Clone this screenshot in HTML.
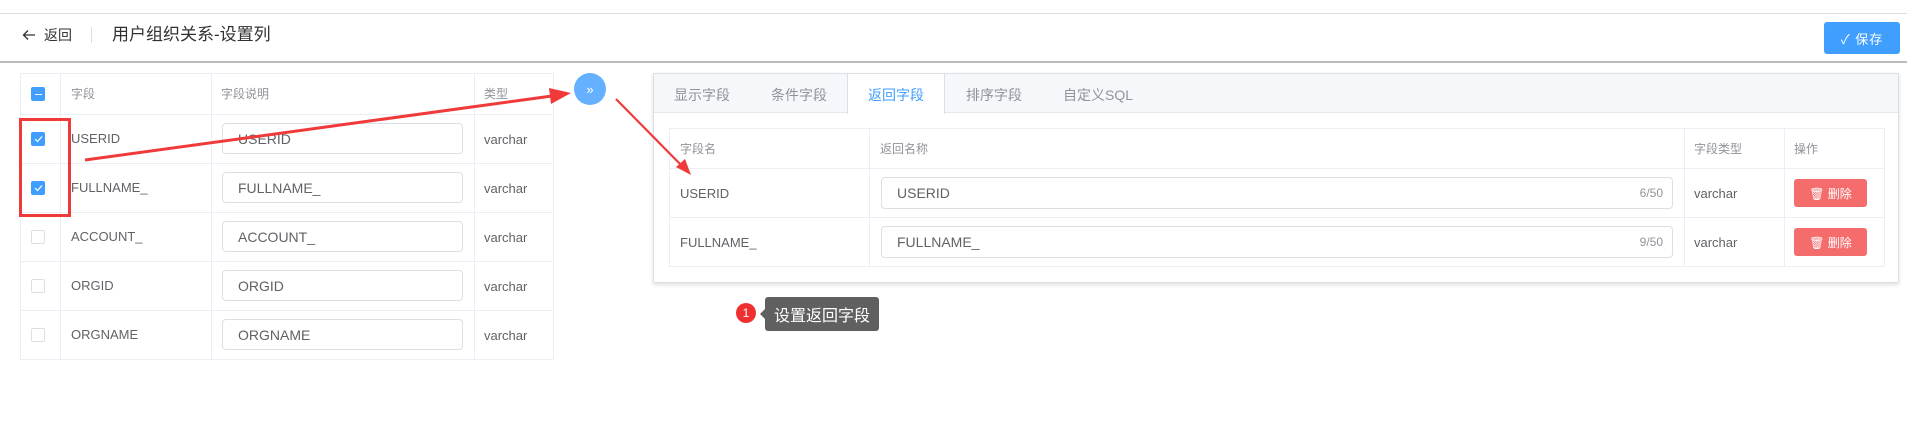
<!DOCTYPE html>
<html><head><meta charset="utf-8"><style>
*{box-sizing:border-box;margin:0;padding:0}
body{width:1907px;height:436px;background:#fff;position:relative;overflow:hidden;font-family:"Liberation Sans","Noto Sans CJK SC",sans-serif;color:#606266;font-size:13px}
.a{position:absolute}
.cell{position:absolute;display:flex;align-items:center}
.inp{position:absolute;border:1px solid #dcdfe6;border-radius:4px;background:#fff;display:flex;align-items:center;padding-left:15px;font-size:14px;color:#606266}
.cb{position:absolute;width:14px;height:14px;border:1px solid #dcdfe6;border-radius:2px;background:#fff}
.cb.on{background:#409eff;border-color:#409eff}
.hl{position:absolute;height:1px;background:#ebeef5}
.vl{position:absolute;width:1px;background:#ebeef5}
.th{color:#909399;font-size:12px;line-height:14px}
.t{position:absolute;line-height:14px}
.del{position:absolute;width:73px;height:28px;background:#f56c6c;border-radius:3px;color:#fff;font-size:12px;display:flex;align-items:center;justify-content:center}
</style></head><body>
<div class="a" style="left:0;top:13px;width:1907px;height:1px;background:#ddd"></div>
<!-- header -->
<svg class="a" style="left:22px;top:29px" width="14" height="12" viewBox="0 0 14 12"><path d="M13 6H2M6 1.5L1.5 6 6 10.5" stroke="#303133" stroke-width="1.3" fill="none"/></svg>
<div class="a" style="left:44px;top:27px;font-size:14px;line-height:16px;color:#303133">返回</div>
<div class="a" style="left:91px;top:27px;width:1px;height:16px;background:#dcdfe6"></div>
<div class="a" style="left:112px;top:24px;font-size:17px;line-height:22px;color:#303133">用户组织关系-设置列</div>
<div class="a" style="left:1824px;top:22px;width:76px;height:32px;background:#409eff;border-radius:3px;color:#fff;font-size:13px;display:flex;align-items:center;justify-content:center;letter-spacing:1px">✓ 保存</div>
<div class="a" style="left:0;top:61px;width:1907px;height:2px;background:#bbb"></div>

<!-- left table -->
<div class="a" style="left:20px;top:73px;width:534px;height:287px;border:1px solid #ebeef5"></div>
<div class="vl" style="left:60px;top:73px;height:287px"></div>
<div class="vl" style="left:211px;top:73px;height:287px"></div>
<div class="vl" style="left:474px;top:73px;height:287px"></div>
<div class="hl" style="left:20px;top:114px;width:534px"></div>
<div class="hl" style="left:20px;top:163px;width:534px"></div>
<div class="hl" style="left:20px;top:212px;width:534px"></div>
<div class="hl" style="left:20px;top:261px;width:534px"></div>
<div class="hl" style="left:20px;top:310px;width:534px"></div>
<div class="cb on" style="left:31px;top:87px"><div style="position:absolute;left:3px;top:6px;width:7px;height:1px;background:#fff"></div></div>
<div class="a th" style="left:71px;top:87px">字段</div>
<div class="a th" style="left:221px;top:87px">字段说明</div>
<div class="a th" style="left:484px;top:87px">类型</div>

<div class="cb on" style="left:31px;top:132px"><svg width="12" height="12" style="position:absolute;left:0;top:0"><path d="M3 6l2.5 2.5L10 3.5" stroke="#fff" stroke-width="1.2" fill="none"/></svg></div>
<div class="cb on" style="left:31px;top:181px"><svg width="12" height="12" style="position:absolute;left:0;top:0"><path d="M3 6l2.5 2.5L10 3.5" stroke="#fff" stroke-width="1.2" fill="none"/></svg></div>
<div class="cb" style="left:31px;top:230px"></div>
<div class="cb" style="left:31px;top:279px"></div>
<div class="cb" style="left:31px;top:328px"></div>

<div class="t" style="left:71px;top:132px">USERID</div>
<div class="t" style="left:71px;top:181px">FULLNAME_</div>
<div class="t" style="left:71px;top:230px">ACCOUNT_</div>
<div class="t" style="left:71px;top:279px">ORGID</div>
<div class="t" style="left:71px;top:328px">ORGNAME</div>

<div class="inp" style="left:222px;top:123px;width:241px;height:31px">USERID</div>
<div class="inp" style="left:222px;top:172px;width:241px;height:31px">FULLNAME_</div>
<div class="inp" style="left:222px;top:221px;width:241px;height:31px">ACCOUNT_</div>
<div class="inp" style="left:222px;top:270px;width:241px;height:31px">ORGID</div>
<div class="inp" style="left:222px;top:319px;width:241px;height:31px">ORGNAME</div>

<div class="t" style="left:484px;top:133px">varchar</div>
<div class="t" style="left:484px;top:182px">varchar</div>
<div class="t" style="left:484px;top:231px">varchar</div>
<div class="t" style="left:484px;top:280px">varchar</div>
<div class="t" style="left:484px;top:329px">varchar</div>

<!-- red box -->
<div class="a" style="left:19px;top:118px;width:52px;height:99px;border:3px solid #f03a3a"></div>

<!-- blue circle -->
<div class="a" style="left:574px;top:73px;width:32px;height:32px;border-radius:50%;background:#66b1ff;color:#fff;font-size:13px;display:flex;align-items:center;justify-content:center">»</div>

<!-- right panel -->
<div class="a" style="left:653px;top:73px;width:1246px;height:210px;border:1px solid #dcdfe6;box-shadow:0 2px 4px rgba(0,0,0,.12);background:#fff"></div>
<div class="a" style="left:654px;top:74px;width:1244px;height:39px;background:#f5f7fa;border-bottom:1px solid #e4e7ed"></div>
<div class="a" style="left:847px;top:74px;width:98px;height:40px;background:#fff;border-left:1px solid #dcdfe6;border-right:1px solid #dcdfe6"></div>
<div class="t" style="left:674px;top:87px;color:#909399;font-size:14px;line-height:16px">显示字段</div>
<div class="t" style="left:771px;top:87px;color:#909399;font-size:14px;line-height:16px">条件字段</div>
<div class="t" style="left:868px;top:87px;color:#409eff;font-size:14px;line-height:16px">返回字段</div>
<div class="t" style="left:966px;top:87px;color:#909399;font-size:14px;line-height:16px">排序字段</div>
<div class="t" style="left:1063px;top:87px;color:#909399;font-size:14px;line-height:16px">自定义SQL</div>

<div class="a" style="left:669px;top:128px;width:1216px;height:139px;border:1px solid #ebeef5"></div>
<div class="vl" style="left:869px;top:128px;height:139px"></div>
<div class="vl" style="left:1684px;top:128px;height:139px"></div>
<div class="vl" style="left:1784px;top:128px;height:139px"></div>
<div class="hl" style="left:669px;top:168px;width:1216px"></div>
<div class="hl" style="left:669px;top:217px;width:1216px"></div>
<div class="a th" style="left:680px;top:142px">字段名</div>
<div class="a th" style="left:880px;top:142px">返回名称</div>
<div class="a th" style="left:1694px;top:142px">字段类型</div>
<div class="a th" style="left:1794px;top:142px">操作</div>
<div class="t" style="left:680px;top:187px">USERID</div>
<div class="t" style="left:680px;top:236px">FULLNAME_</div>
<div class="inp" style="left:881px;top:177px;width:792px;height:32px">USERID<span style="position:absolute;right:9px;color:#909399;font-size:12px">6/50</span></div>
<div class="inp" style="left:881px;top:226px;width:792px;height:32px">FULLNAME_<span style="position:absolute;right:9px;color:#909399;font-size:12px">9/50</span></div>
<div class="t" style="left:1694px;top:187px">varchar</div>
<div class="t" style="left:1694px;top:236px">varchar</div>
<div class="del" style="left:1794px;top:179px">🗑&nbsp;删除</div>
<div class="del" style="left:1794px;top:228px">🗑&nbsp;删除</div>

<!-- tooltip -->
<div class="a" style="left:736px;top:303px;width:20px;height:20px;border-radius:50%;background:#f03030;color:#fff;font-size:12px;display:flex;align-items:center;justify-content:center">1</div>
<div class="a" style="left:760px;top:309px;width:0;height:0;border-top:5px solid transparent;border-bottom:5px solid transparent;border-right:5px solid #606060"></div>
<div class="a" style="left:765px;top:297px;width:114px;height:34px;background:#606060;border-radius:3px;color:#fff;font-size:16px;display:flex;align-items:center;justify-content:center">设置返回字段</div>

<!-- arrows -->
<svg class="a" style="left:0;top:0" width="1907" height="436">
<path d="M85 160L552 96" stroke="#f03a3a" stroke-width="3"/>
<path d="M549 88L571 93L551 104Z" fill="#f03a3a"/>
<path d="M616 99L684 168" stroke="#f03a3a" stroke-width="2.2"/>
<path d="M676 167L691 175L685 159Z" fill="#f03a3a"/>
</svg>
</body></html>
